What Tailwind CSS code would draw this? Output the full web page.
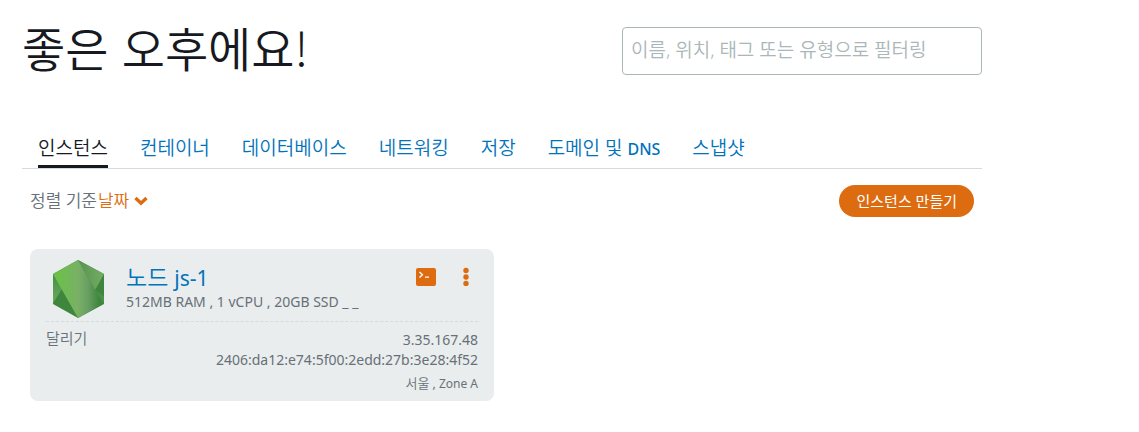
<!DOCTYPE html>
<html lang="ko">
  <head>
    <meta charset="UTF-8" />
    <meta name="viewport" content="width=device-width, initial-scale=1.0" />
    <title>Instances</title>
    <script src="https://cdn.jsdelivr.net/npm/@tailwindcss/browser@4"></script>
  </head>
  <body class="bg-white font-['Noto_Sans','Noto_Sans_CJK_KR',sans-serif] text-[#687078]">
    <main class="max-w-[1004px] px-[22px]">
      <!-- greeting and filter -->
      <header class="flex items-start justify-between pt-[13px]">
        <h1 class="text-[47px] leading-[68px] font-[350] text-[#16191f] font-['Noto_Sans_CJK_KR',sans-serif]">좋은 오후에요<span class="font-light">!</span></h1>
        <input
          type="text"
          aria-label="필터"
          placeholder="이름, 위치, 태그 또는 유형으로 필터링"
          class="mt-[14px] h-12 w-[360px] rounded border border-[#aab7b8] px-2 pb-[2px] text-[19px] font-[350] placeholder:text-[#aab7b8]"
        />
      </header>

      <!-- tabs -->
      <nav class="mt-[51px] flex gap-8 border-b border-[#d5dbdb] px-4 text-[19px] leading-[33px] font-[350] text-[#0073bb]">
        <a href="#" class="border-b-3 border-[#16191f] text-[#16191f]">인스턴스</a>
        <a href="#">컨테이너</a>
        <a href="#">데이터베이스</a>
        <a href="#">네트워킹</a>
        <a href="#">저장</a>
        <a href="#">도메인 및 <span class="text-base font-medium">DNS</span></a>
        <a href="#">스냅샷</a>
      </nav>

      <!-- sort and create -->
      <div class="mt-4 flex items-center justify-between px-2">
        <div class="flex items-center text-[17px] font-[350]">
          <span>정렬 기준</span>
          <button class="ml-px flex items-center gap-[5px] text-[#dd6b10]">
            날짜
            <svg class="h-[10px] w-[14px]" viewBox="0 0 14 10" fill="none" stroke="currentColor" stroke-width="3.4"><path d="M1.5 2 7 7.2 12.5 2" /></svg>
          </button>
        </div>
        <button class="h-8 rounded-full bg-[#dd6b10] px-[17px] text-[15px] text-white">인스턴스 만들기</button>
      </div>

      <!-- instance card -->
      <section class="mt-8 ml-2 w-[464px] rounded-lg bg-[#e9eded] px-4 pt-[10px] pb-[7px]">
        <div class="flex border-b border-dashed border-[#d5dbdb] pb-[2px]">
          <svg class="mr-[21px] ml-[6px] h-[60px] w-[53px]" viewBox="0 0 53 60">
            <defs>
              <linearGradient id="front" x1="0" y1="0" x2="1" y2="0">
                <stop offset="0.1" stop-color="#6cc04a" />
                <stop offset="0.5" stop-color="#79b065" />
                <stop offset="0.7" stop-color="#689f63" />
                <stop offset="0.92" stop-color="#3e863d" />
              </linearGradient>
              <linearGradient id="left" x1="0" y1="1" x2="0" y2="0">
                <stop offset="0" stop-color="#6baa5c" />
                <stop offset="1" stop-color="#478d48" />
              </linearGradient>
              <linearGradient id="right" x1="0" y1="0" x2="1" y2="0">
                <stop offset="0" stop-color="#579450" />
                <stop offset="1" stop-color="#76ac64" />
              </linearGradient>
            </defs>
            <path d="M26 1 52 15V45L26 59 1 45V15Z" fill="#3e863d" />
            <path d="M1 15 10 30 1 44Z" fill="url(#left)" />
            <path d="M26 1 52 15 43 31Z" fill="url(#right)" />
            <path d="M43 31 52 37V45Z" fill="#4a9148" />
            <path d="M26 1 1 15 26 59 51 45Z" fill="url(#front)" />
          </svg>
          <div class="grow pt-1">
            <h2 class="text-[23px] leading-7 font-[350] text-[#0073bb]"><a href="#">노드 <span class="text-[21px] font-normal">js-1</span></a></h2>
            <p class="text-sm leading-5">512MB RAM , 1 vCPU , 20GB SSD _ _</p>
          </div>
          <div class="flex items-start gap-6 pt-2 text-[#dd6b10]">
            <button aria-label="터미널">
              <svg class="h-[20px] w-[20px]" viewBox="0 0 20 20"><rect y="1" width="20" height="18" rx="2" fill="currentColor" /><path d="M3.5 5 6.5 7.8 3.5 10.6M9 10.2H13" fill="none" stroke="#fff" stroke-width="1.3" /></svg>
            </button>
            <button aria-label="메뉴">
              <svg class="h-[20px] w-[18px]" viewBox="0 0 18 20" fill="currentColor"><circle cx="6" cy="3.5" r="2.7" /><circle cx="6" cy="10" r="2.7" /><circle cx="6" cy="16.4" r="2.7" /></svg>
            </button>
          </div>
        </div>
        <div class="flex justify-between pt-2 text-sm leading-5">
          <p class="text-[15px] leading-4 font-[350]">달리기</p>
          <div class="text-right">
            <p>3.35.167.48</p>
            <p>2406:da12:e74:5f00:2edd:27b:3e28:4f52</p>
            <p class="mt-[3px] text-xs leading-5"><span class="text-[13px] font-[350]">서울</span> , Zone A</p>
          </div>
        </div>
      </section>
    </main>
  </body>
</html>
